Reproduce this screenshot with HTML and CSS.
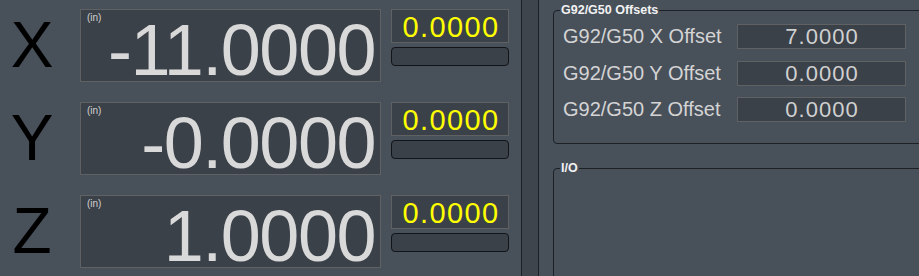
FILE: index.html
```html
<!DOCTYPE html>
<html lang="en">
<head>
  <meta charset="UTF-8">
  <title>DRO</title>
  <link rel="stylesheet" href="styles.css">
</head>
<body>
  <div class="dro">
    <div class="axis-row">
      <div class="axis-letter">X</div>
      <div class="axis-box"><span class="unit">(in)</span><span class="axis-value">-11.0000</span></div>
      <div class="axis-side">
        <div class="axis-small">0.0000</div>
        <div class="axis-bar"></div>
      </div>
    </div>
    <div class="axis-row">
      <div class="axis-letter">Y</div>
      <div class="axis-box"><span class="unit">(in)</span><span class="axis-value">-0.0000</span></div>
      <div class="axis-side">
        <div class="axis-small">0.0000</div>
        <div class="axis-bar"></div>
      </div>
    </div>
    <div class="axis-row">
      <div class="axis-letter">Z</div>
      <div class="axis-box"><span class="unit">(in)</span><span class="axis-value">1.0000</span></div>
      <div class="axis-side">
        <div class="axis-small">0.0000</div>
        <div class="axis-bar"></div>
      </div>
    </div>
  </div>

  <div class="divider"></div>

  <div class="panel">
    <fieldset class="group offsets">
      <legend>G92/G50 Offsets</legend>
      <div class="offset-rows">
        <div class="offset-row"><span class="offset-label">G92/G50 X Offset</span><span class="offset-value">7.0000</span></div>
        <div class="offset-row"><span class="offset-label">G92/G50 Y Offset</span><span class="offset-value">0.0000</span></div>
        <div class="offset-row"><span class="offset-label">G92/G50 Z Offset</span><span class="offset-value">0.0000</span></div>
      </div>
    </fieldset>
    <fieldset class="group io">
      <legend>I/O</legend>
    </fieldset>
  </div>
</body>
</html>
```

FILE: styles.css
```css
:root {
  --bg: #48505a;
  --well: #3b4149;
  --well-border: #5f6163;
  --line: #1d2126;
  --text: #d9d9d9;
}

html, body {
  height: 100%;
}
body {
  margin: 0;
  background: var(--bg);
  font-family: 'Liberation Sans', Arial, sans-serif;
  color: var(--text);
  display: flex;
  overflow: hidden;
}

/* left: axis readouts */
.dro {
  width: 521px;
  flex: none;
  padding-top: 9px;
  display: flex;
  flex-direction: column;
  gap: 20px;
}
.axis-row {
  display: flex;
  height: 73px;
}
.axis-letter {
  width: 64px;
  margin-right: 16px;
  text-align: center;
  font-size: 64px;
  line-height: 73px;
  color: #000;
}
.axis-box {
  position: relative;
  box-sizing: border-box;
  width: 301px;
  height: 73px;
  background: var(--well);
  border: 1px solid var(--well-border);
  display: flex;
  justify-content: flex-end;
  align-items: flex-start;
  padding: 4px 5px 0 0;
}
.unit {
  position: absolute;
  top: 2px;
  left: 6px;
  font-size: 10px;
  color: #d0d0d0;
}
.axis-value {
  font-size: 72px;
  line-height: 72px;
  letter-spacing: -1.5px;
}
.axis-side {
  margin-left: 10px;
  width: 118px;
  display: flex;
  flex-direction: column;
  gap: 4px;
}
.axis-small {
  box-sizing: border-box;
  height: 34px;
  background: var(--well);
  border: 1px solid var(--well-border);
  text-align: center;
  padding: 1px 0 0 2px;
  font-size: 29px;
  line-height: 32px;
  letter-spacing: 1.4px;
  color: #ffff00;
}
.axis-bar {
  box-sizing: border-box;
  height: 19px;
  background: var(--well);
  border: 1px solid #111418;
  border-radius: 4px;
}

/* middle splitter */
.divider {
  flex: none;
  width: 16px;
  height: 100%;
  background: #3e454d;
  border-left: 1px solid var(--line);
  border-right: 1px solid var(--line);
}

/* right: group boxes */
.panel {
  flex: 1;
  min-width: 0;
  overflow: hidden;
}
.group {
  box-sizing: border-box;
  width: 420px;
  min-width: 0;
  margin: 0 0 0 14px;
  border: 1px solid var(--line);
  border-radius: 4px;
  padding: 0 0 0 9px;
}
.group legend {
  margin-left: -3px;
  padding: 0 1px;
  font-size: 12.5px;
  line-height: 14px;
  font-weight: bold;
  color: #f2f2f2;
}
.offsets {
  margin-top: 3px;
  padding-bottom: 21px;
}
.io {
  margin-top: 17px;
  height: 200px;
}
.offset-rows {
  padding-top: 7px;
  display: flex;
  flex-direction: column;
  gap: 11.5px;
}
.offset-row {
  display: flex;
  align-items: center;
  height: 25px;
}
.offset-label {
  width: 174px;
  font-size: 20px;
  color: #d4d4d4;
}
.offset-value {
  box-sizing: border-box;
  width: 169px;
  height: 25px;
  background: var(--well);
  border: 1px solid var(--well-border);
  text-align: center;
  padding: 1px 0 0 1px;
  font-size: 22px;
  line-height: 22px;
  letter-spacing: 1px;
  color: #d0d0d0;
}
```
